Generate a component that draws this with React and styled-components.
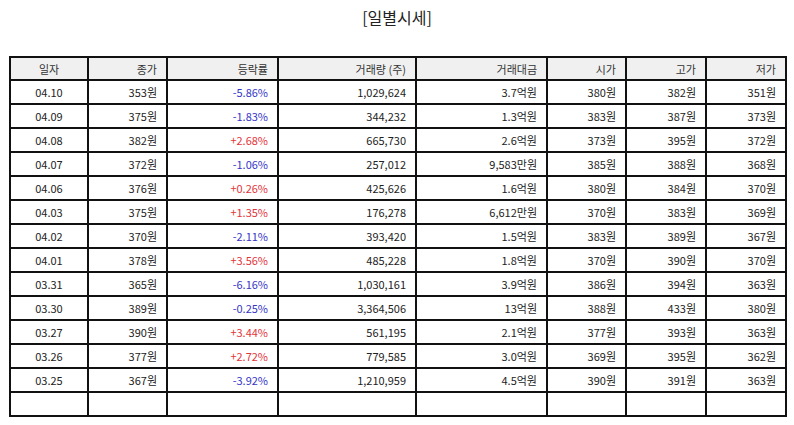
import React from "react";
import styled, { createGlobalStyle } from "styled-components";

const Global = createGlobalStyle`
  html, body { margin: 0; padding: 0; background: #fff; }
  body { font-family: "Noto Sans CJK KR", "Noto Sans", sans-serif; }
`;

const Page = styled.div`
  width: 794px;
  padding: 6px 0 0 9px;
  box-sizing: border-box;
`;

const Title = styled.h2`
  margin: 0 0 0 -9px;
  width: 794px;
  text-align: center;
  font-size: 16px;
  font-weight: 400;
  color: #222;
  line-height: 22px;
  height: 50px;
`;

const Table = styled.table`
  border-collapse: collapse;
  table-layout: fixed;
  width: 778px;
  font-size: 11px;
  color: #222;
`;

const Th = styled.th`
  background: #f0f0f0;
  border: 2px solid #111;
  height: 21px;
  padding: 0 9px;
  font-weight: 400;
  text-align: ${(p) => (p.$center ? "center" : "right")};
  color: #333;
`;

const Td = styled.td`
  border: 2px solid #111;
  height: 22px;
  padding: 0 9px;
  text-align: ${(p) => (p.$center ? "center" : "right")};
  color: ${(p) => p.$color || "#222"};
  white-space: nowrap;
`;

const widths = [78, 79, 111, 138, 131, 79, 80, 80];
const headers = ["일자", "종가", "등락률", "거래량 (주)", "거래대금", "시가", "고가", "저가"];

const rows = [
  ["04.10", "353원", "-5.86%", "1,029,624", "3.7억원", "380원", "382원", "351원"],
  ["04.09", "375원", "-1.83%", "344,232", "1.3억원", "383원", "387원", "373원"],
  ["04.08", "382원", "+2.68%", "665,730", "2.6억원", "373원", "395원", "372원"],
  ["04.07", "372원", "-1.06%", "257,012", "9,583만원", "385원", "388원", "368원"],
  ["04.06", "376원", "+0.26%", "425,626", "1.6억원", "380원", "384원", "370원"],
  ["04.03", "375원", "+1.35%", "176,278", "6,612만원", "370원", "383원", "369원"],
  ["04.02", "370원", "-2.11%", "393,420", "1.5억원", "383원", "389원", "367원"],
  ["04.01", "378원", "+3.56%", "485,228", "1.8억원", "370원", "390원", "370원"],
  ["03.31", "365원", "-6.16%", "1,030,161", "3.9억원", "386원", "394원", "363원"],
  ["03.30", "389원", "-0.25%", "3,364,506", "13억원", "388원", "433원", "380원"],
  ["03.27", "390원", "+3.44%", "561,195", "2.1억원", "377원", "393원", "363원"],
  ["03.26", "377원", "+2.72%", "779,585", "3.0억원", "369원", "395원", "362원"],
  ["03.25", "367원", "-3.92%", "1,210,959", "4.5억원", "390원", "391원", "363원"],
];

const rateColor = (v) => (v.startsWith("+") ? "#e3343a" : "#3535c8");

export default function App() {
  return (
    <Page>
      <Global />
      <Title>[일별시세]</Title>
      <Table>
        <colgroup>
          {widths.map((w, i) => (
            <col key={i} style={{ width: w }} />
          ))}
        </colgroup>
        <thead>
          <tr>
            {headers.map((h, i) => (
              <Th key={h} $center={i === 0}>{h}</Th>
            ))}
          </tr>
        </thead>
        <tbody>
          {rows.map((r) => (
            <tr key={r[0]}>
              {r.map((c, i) => (
                <Td key={i} $center={i === 0} $color={i === 2 ? rateColor(c) : undefined}>
                  {c}
                </Td>
              ))}
            </tr>
          ))}
          <tr>
            {widths.map((_, i) => (
              <Td key={i} />
            ))}
          </tr>
        </tbody>
      </Table>
    </Page>
  );
}
